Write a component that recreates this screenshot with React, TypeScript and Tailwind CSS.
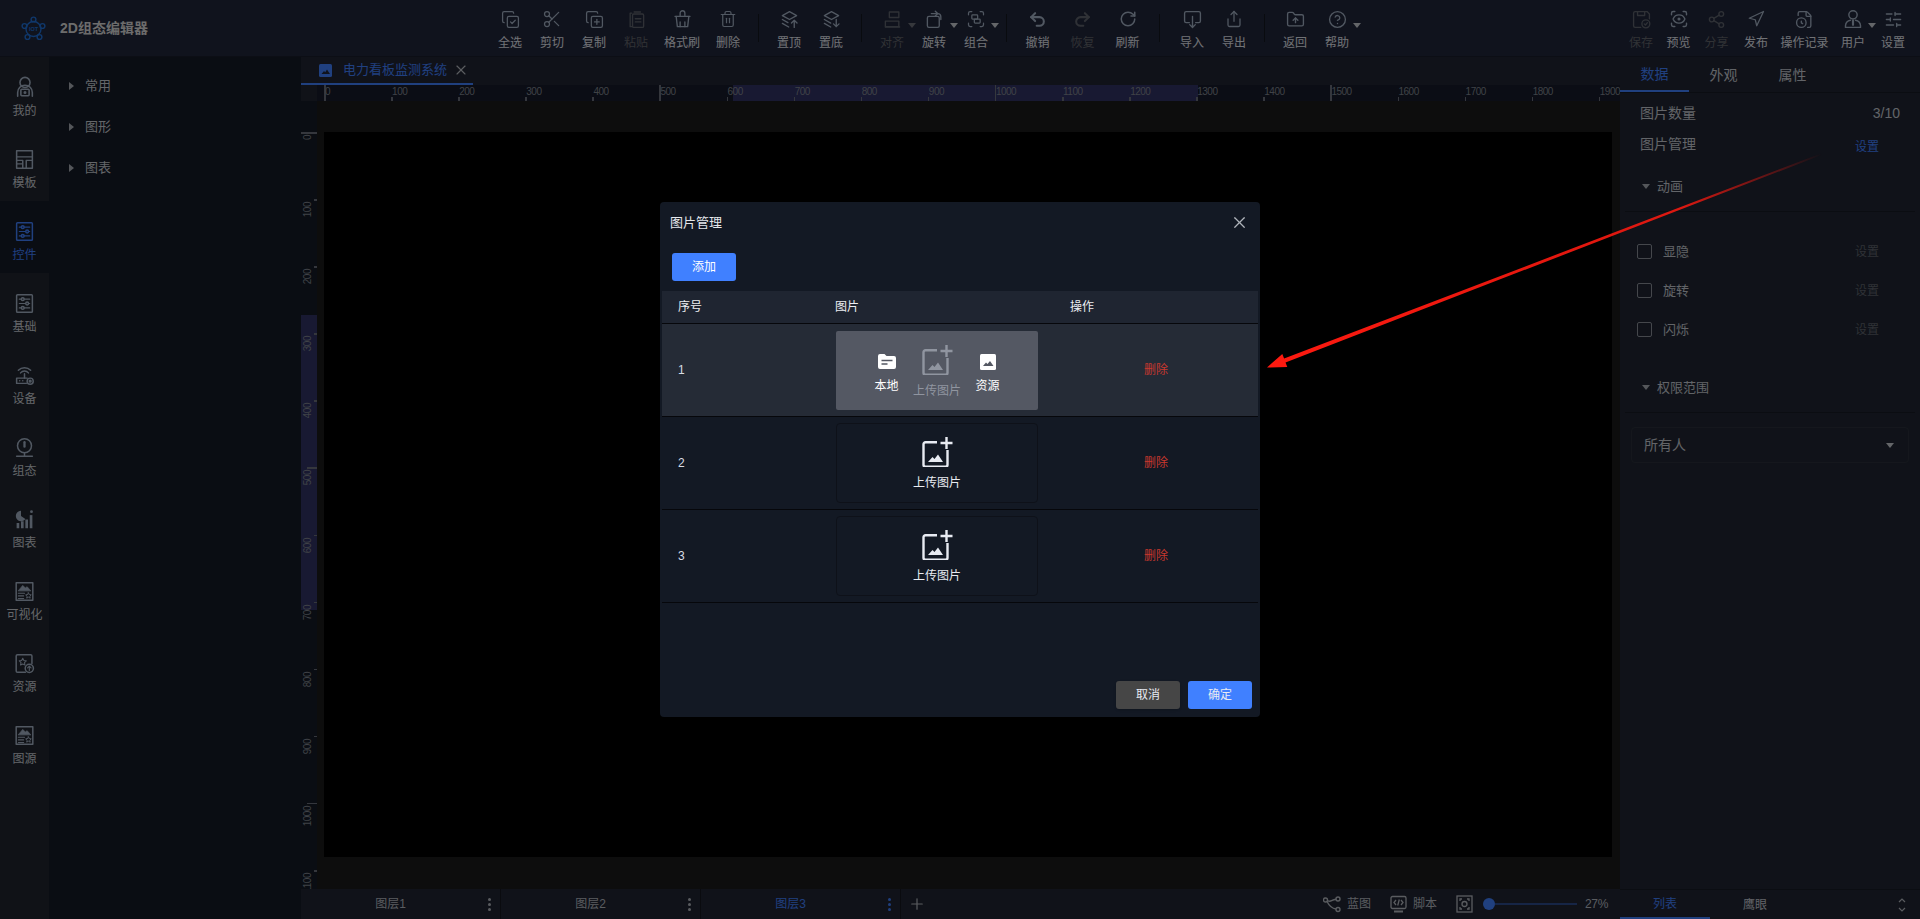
import React from 'react';
import {
  CircleHelp,
  CopyCheck,
  CopyPlus,
  FileClock,
  FolderUp,
  Group,
  Navigation,
  Plus,
  Redo2,
  RotateCw,
  ScanEye,
  Scissors,
  Share,
  Share2,
  SlidersHorizontal,
  Trash2,
  Undo2,
  X,
} from 'lucide-react';

// ---- small drawings the icon package has no match for ----
function Svg({ size = 19, children, className = '' }: { size?: number; children: React.ReactNode; className?: string }) {
  return (
    <svg width={size} height={size} viewBox="0 0 24 24" fill="none" stroke="currentColor" strokeWidth={1.7} strokeLinecap="round" strokeLinejoin="round" className={className}>
      {children}
    </svg>
  );
}

const PasteIcon = () => (
  <Svg>
    <path d="M6 4H4v17h2" />
    <rect x="7" y="5" width="14" height="17" rx="1.5" />
    <path d="M9 2.5h8M10.5 11h7M10.5 15h7" />
  </Svg>
);
const BrushIcon = () => (
  <Svg>
    <path d="M9 7V4a3 3 0 0 1 6 0v3" />
    <path d="M2.5 8h19" />
    <path d="M4 8l1.5 13h13L20 8" />
    <path d="M9 21v-6M15 21v-6" />
  </Svg>
);
const LayerTopIcon = () => (
  <Svg>
    <path d="M12 2l9 5-9 5-9-5z" />
    <path d="M3 12l7 4M3 17l8 4.5" />
    <path d="M18 22v-9M14.5 16.5L18 13l3.5 3.5" />
  </Svg>
);
const LayerBottomIcon = () => (
  <Svg>
    <path d="M12 2l9 5-9 5-9-5z" />
    <path d="M3 12l8 4.5M3 17l8 4.5" />
    <path d="M18 12v9M14.5 17.5L18 21l3.5-3.5" />
  </Svg>
);
const AlignIcon = () => (
  <Svg>
    <rect x="8" y="2.5" width="12" height="7" />
    <rect x="3" y="14" width="17" height="7" />
    <path d="M3 21.5h18" />
  </Svg>
);
const RotateIcon = () => (
  <Svg>
    <rect x="3" y="8" width="15" height="14" rx="2" />
    <path d="M8 4.5h8a4 4 0 0 1 4 4V12" />
    <path d="M13 1.5l3 3-3 3" />
  </Svg>
);
const ImportIcon = () => (
  <Svg>
    <path d="M8 16H4a2 2 0 0 1-2-2V4a2 2 0 0 1 2-2h16a2 2 0 0 1 2 2v10a2 2 0 0 1-2 2h-4" />
    <path d="M12 8v14M8.5 18.5L12 22l3.5-3.5" />
  </Svg>
);
const SaveIcon = () => (
  <Svg>
    <path d="M11 22H4a2 2 0 0 1-2-2V4a2 2 0 0 1 2-2h15l3 3v6" />
    <path d="M7 2v5h9V2" />
    <circle cx="17.5" cy="17.5" r="5" />
    <path d="M15.5 17.5l1.5 1.5 2.5-3" />
  </Svg>
);
const UserIcon = () => (
  <Svg size={20}>
    <circle cx="12" cy="7" r="5" />
    <path d="M3 22v-2a7 7 0 0 1 6-6.5M21 22v-2a7 7 0 0 0-6-6.5" />
    <path d="M3 22h18" />
    <path d="M12 14v5" strokeWidth={2.6} />
  </Svg>
);

const BoxSliders = () => (
  <Svg size={21}>
    <rect x="3" y="2" width="18" height="20" rx="1" />
    <path d="M6 7h12M6 12h12M6 17h12" strokeWidth={1.2} />
    <circle cx="10" cy="7" r="1.6" fill="#20263a" />
    <circle cx="15" cy="12" r="1.6" fill="#20263a" />
    <circle cx="10" cy="17" r="1.6" fill="#20263a" />
  </Svg>
);
function GalleryIcon() {
  return (
    <Svg size={21}>
      <rect x="2.5" y="2" width="19" height="20" />
      <path d="M5 11l5-6 3 3 2-1.5 4 4.5z" fill="currentColor" strokeWidth={0.8} />
      <path d="M5 14h7M5 17h6M5 20h6" strokeWidth={1.3} />
      <path d="M16.5 13.5l1 2 2.2.3-1.6 1.6.4 2.2-2-1.1-2 1.1.4-2.2-1.6-1.6 2.2-.3z" strokeWidth={1.1} />
    </Svg>
  );
}
const railIcons: Record<string, React.ReactNode> = {
  我的: (
    <Svg size={22}>
      <circle cx="12" cy="7" r="5.5" />
      <path d="M4 22v-4a8 8 0 0 1 16 0v4" />
      <rect x="7.5" y="14.5" width="9" height="7" rx="1" />
      <circle cx="12" cy="18" r=".8" />
    </Svg>
  ),
  模板: (
    <Svg size={21}>
      <rect x="3" y="2" width="18" height="20" />
      <path d="M3 9h18M3 13h7v9M14 13h7M14 13v9M3 17h7" />
    </Svg>
  ),
  控件: <BoxSliders />,
  基础: <BoxSliders />,
  设备: (
    <Svg size={21}>
      <path d="M7.5 9a6 6 0 0 1 9 0M5 6a10 10 0 0 1 14 0" />
      <path d="M12 10v5" />
      <path d="M14 21H3v-6h12" />
      <circle cx="18.5" cy="18.5" r="3.5" />
      <circle cx="18.5" cy="18.5" r="1" />
      <path d="M6.5 18h.01M10 18h.01" />
    </Svg>
  ),
  组态: (
    <Svg size={21}>
      <circle cx="12" cy="10" r="8" />
      <path d="M12 6v5" strokeWidth={2.6} />
      <path d="M12 18v3M3 22h18" />
    </Svg>
  ),
  图表: (
    <svg width={21} height={21} viewBox="0 0 24 24" fill="currentColor">
      <path d="M8 2a6 6 0 1 0 5 9.5L8 8z" />
      <rect x="3" y="16" width="3" height="6" />
      <rect x="8" y="14" width="3" height="8" />
      <rect x="13" y="12" width="3" height="10" />
      <rect x="18" y="7" width="3" height="15" />
      <circle cx="20" cy="3" r="1.6" />
    </svg>
  ),
  可视化: <GalleryIcon />,
  资源: (
    <Svg size={21}>
      <path d="M13 22H4a1.5 1.5 0 0 1-1.5-1.5v-17A1.5 1.5 0 0 1 4 2h15a1.5 1.5 0 0 1 1.5 1.5V12" />
      <path d="M10 6l1.3 2.6 2.7.4-2 2 .5 2.8-2.5-1.3-2.5 1.3.5-2.8-2-2 2.7-.4z" strokeWidth={1.2} />
      <circle cx="17.5" cy="17.5" r="4.7" />
      <path d="M17.5 20v-5M15.5 17l2-2 2 2" strokeWidth={1.3} />
    </Svg>
  ),
  图源: <GalleryIcon />,
};

// tiny blue logo
const Logo = () => (
  <svg width={25} height={25} viewBox="0 0 25 25" fill="none" stroke="currentColor" strokeWidth={1.4}>
    <circle cx="12.5" cy="3.5" r="2.4" />
    <circle cx="3.5" cy="10" r="2.4" />
    <circle cx="21.5" cy="10" r="2.4" />
    <circle cx="6.5" cy="21" r="2.4" />
    <circle cx="18.5" cy="21" r="2.4" />
    <circle cx="12.5" cy="13" r="7.5" />
    <text x="12.5" y="15" textAnchor="middle" fontSize="5.5" fontWeight="700" fill="currentColor" stroke="none">IOT</text>
  </svg>
);

function Caret({ className = '' }: { className?: string }) {
  return <span className={`inline-block w-0 h-0 border-x-[4px] border-t-[5px] border-x-transparent border-t-current ${className}`} />;
}

function ToolItem({
  label,
  className = 'w-[42px]',
  disabled,
  caret,
  children,
}: {
  label: string;
  className?: string;
  disabled?: boolean;
  caret?: boolean;
  children: React.ReactNode;
}) {
  return (
    <div className={`flex flex-col items-center pt-[10px] shrink-0 ${className}`}>
      <div className={`relative h-[18px] flex items-center justify-center ${disabled ? 'text-[#5e636c]' : 'text-[#a3b1c4]'}`}>
        {children}
        {caret && <Caret className={`absolute left-[25px] top-[13px] ${disabled ? 'text-[#6d7078]' : 'text-[#c8ccd2]'}`} />}
      </div>
      <div className={`mt-[7px] text-xs leading-4 whitespace-nowrap ${disabled ? 'text-[#62656b]' : 'text-[#e0e5ec]'}`}>{label}</div>
    </div>
  );
}

const Divider = ({ className = 'mx-[9px]' }: { className?: string }) => (
  <div className={`w-px h-[28px] mt-[14px] bg-[#13161f] shrink-0 ${className}`} />
);

function Header() {
  return (
    <header className="h-[57px] shrink-0 flex bg-[#20263a] border-b border-[#181c2a]">
      <div className="w-[489px] shrink-0 flex items-center pl-[21px]">
        <span className="text-[#1f6fd6]"><Logo /></span>
        <span className="ml-[14px] text-sm font-bold text-[#d8d8d8]">2D组态编辑器</span>
      </div>
      <ToolItem label="全选"><CopyCheck size={19} strokeWidth={1.6} /></ToolItem>
      <ToolItem label="剪切"><Scissors size={20} strokeWidth={1.5} /></ToolItem>
      <ToolItem label="复制"><CopyPlus size={19} strokeWidth={1.6} /></ToolItem>
      <ToolItem label="粘贴" disabled><PasteIcon /></ToolItem>
      <ToolItem label="格式刷" className="w-[50px]"><BrushIcon /></ToolItem>
      <ToolItem label="删除"><Trash2 size={18} strokeWidth={1.6} /></ToolItem>
      <Divider />
      <ToolItem label="置顶"><LayerTopIcon /></ToolItem>
      <ToolItem label="置底"><LayerBottomIcon /></ToolItem>
      <Divider />
      <ToolItem label="对齐" disabled caret><AlignIcon /></ToolItem>
      <ToolItem label="旋转" caret><RotateIcon /></ToolItem>
      <ToolItem label="组合" caret><Group size={20} strokeWidth={1.5} /></ToolItem>
      <Divider />
      <ToolItem label="撤销" className="w-[45px] ml-[-1px]"><Undo2 size={19} strokeWidth={2.6} /></ToolItem>
      <ToolItem label="恢复" className="w-[45px]" disabled><Redo2 size={19} strokeWidth={2.6} /></ToolItem>
      <ToolItem label="刷新" className="w-[45px]"><RotateCw size={18} strokeWidth={2} /></ToolItem>
      <Divider className="ml-[9px] mr-[11px]" />
      <ToolItem label="导入"><ImportIcon /></ToolItem>
      <ToolItem label="导出"><Share size={18} strokeWidth={1.7} /></ToolItem>
      <Divider />
      <ToolItem label="返回"><FolderUp size={19} strokeWidth={1.7} /></ToolItem>
      <ToolItem label="帮助" caret><CircleHelp size={19} strokeWidth={1.7} /></ToolItem>

      <div className="ml-auto flex pr-[7px]">
        <ToolItem label="保存" className="w-[38px]" disabled><SaveIcon /></ToolItem>
        <ToolItem label="预览" className="w-[37px]"><ScanEye size={20} strokeWidth={1.7} /></ToolItem>
        <ToolItem label="分享" className="w-[39px]" disabled><Share2 size={19} strokeWidth={1.7} /></ToolItem>
        <ToolItem label="发布" className="w-[40px]"><Navigation size={18} strokeWidth={1.7} /></ToolItem>
        <ToolItem label="操作记录" className="w-[57px]"><FileClock size={19} strokeWidth={1.7} /></ToolItem>
        <ToolItem label="用户" className="w-[40px]" caret><UserIcon /></ToolItem>
        <ToolItem label="设置" className="w-[40px]"><SlidersHorizontal size={19} strokeWidth={1.7} /></ToolItem>
      </div>
    </header>
  );
}

const RAIL = ['我的', '模板', '控件', '基础', '设备', '组态', '图表', '可视化', '资源', '图源'];

function Rail() {
  return (
    <nav className="w-[49px] shrink-0 bg-[#20252f]">
      {RAIL.map((name) => {
        const active = name === '控件';
        return (
          <div key={name} className={`h-[72px] flex flex-col items-center pt-[20px] ${active ? 'bg-[#141a26]' : ''}`}>
            <div className={`h-5 flex items-center justify-center ${active ? 'text-[#4080ff]' : 'text-[#a3b1c4]'}`}>{railIcons[name]}</div>
            <div className={`mt-[6px] h-4 text-xs leading-4 whitespace-nowrap ${active ? 'text-[#4080ff]' : 'text-[#c8ccd2]'}`}>{name}</div>
          </div>
        );
      })}
    </nav>
  );
}

function Library() {
  return (
    <aside className="w-[252px] shrink-0 bg-[#141a26] pt-[8px]">
      {['常用', '图形', '图表'].map((name) => (
        <div key={name} className="h-[41px] flex items-center pl-[20px] text-[13px] text-[#c8ccd2]">
          <span className="w-0 h-0 border-y-[4px] border-l-[5px] border-y-transparent border-l-[#a8adb5] mr-[11px]" />
          {name}
        </div>
      ))}
    </aside>
  );
}

const TICKS_X = Array.from({ length: 20 }, (_, i) => i * 100);
const TICKS_Y = Array.from({ length: 12 }, (_, i) => i * 100);

function TopRuler() {
  return (
    <div className="h-4 shrink-0 flex bg-[#161b2a] text-[10px] leading-[14px] tracking-[-0.5px] text-[#7f848e]">
      <div className="w-4 shrink-0 bg-[#212530]" />
      <div className="relative flex-1 flex pl-[7px] overflow-hidden">
        <div className="absolute left-[416px] top-0 w-[465px] h-full bg-[#313264]" />
        {TICKS_X.map((t) => (
          <div key={t} className="relative w-[67.1px] shrink-0 pl-[1px]">
            <span className={`absolute left-0 bottom-0 w-[1.5px] bg-[#6a6f7a] ${t % 500 === 0 ? 'h-4' : 'h-[4px]'}`} />
            <span className="relative">{t}</span>
          </div>
        ))}
      </div>
    </div>
  );
}

function LeftRuler() {
  return (
    <div className="relative w-4 shrink-0 bg-[#151b27] pt-[31px] overflow-hidden text-[10px] leading-[14px] tracking-[-0.5px] text-[#7f848e]">
      <div className="absolute left-0 top-[214px] w-full h-[295px] bg-[#313264]" />
      {TICKS_Y.map((t) => (
        <div key={t} className="relative h-[67.1px]">
          <span className={`absolute right-0 top-0 h-[1.5px] bg-[#6a6f7a] ${t === 0 ? 'w-4' : t % 500 === 0 ? 'w-[10px]' : 'w-[3px]'}`} />
          <span className="absolute left-0 top-[3px] [writing-mode:vertical-rl] rotate-180">{t}</span>
        </div>
      ))}
    </div>
  );
}

function LayerTab({ name, active }: { name: string; active?: boolean }) {
  return (
    <div className={`relative w-[200px] shrink-0 flex items-center justify-center pr-[20px] border-r border-[#14171f] text-xs ${active ? 'text-[#4080ff]' : 'text-[#b4b8c0]'}`}>
      {name}
      <span className="absolute right-[9px] top-[9px] flex flex-col gap-[2px]">
        <i className="w-[3px] h-[3px] rounded-full bg-current" />
        <i className="w-[3px] h-[3px] rounded-full bg-current" />
        <i className="w-[3px] h-[3px] rounded-full bg-current" />
      </span>
    </div>
  );
}

function MountainBox({ className }: { className: string }) {
  return (
    <svg viewBox="0 0 13 13" className={`shrink-0 ${className}`}>
      <rect width="13" height="13" rx="1.5" fill="#4080ff" />
      <path d="M2.5 10l2.5-3 1.2 1.2L8 5.5 11 10z" fill="#20263a" />
    </svg>
  );
}

function Stage() {
  return (
    <main className="flex-1 min-w-0 flex flex-col">
      <div className="h-[28px] shrink-0 flex bg-[#202532]">
        <div className="w-[172px] flex items-center pl-[18px] border-b-2 border-[#4080ff] text-[13px] text-[#4080ff]">
          <MountainBox className="w-[13px] h-[13px] mr-[11px]" />
          <span className="whitespace-nowrap">电力看板监测系统</span>
          <X size={16} strokeWidth={1.7} className="ml-[6px] shrink-0 text-[#b8bcc4]" />
        </div>
      </div>
      <TopRuler />
      <div className="flex-1 min-h-0 flex">
        <LeftRuler />
        <div className="flex-1 pl-[7px] pr-[8px] pt-[31px] pb-[32px] bg-[#1b1b1b]">
          <div className="w-full h-full bg-black" />
        </div>
      </div>
      <div className="h-[30px] shrink-0 flex bg-[#202532]">
        <LayerTab name="图层1" />
        <LayerTab name="图层2" />
        <LayerTab name="图层3" active />
        <div className="w-[32px] flex items-center justify-center text-[#b4b8c0]"><Plus size={18} strokeWidth={1.6} /></div>
        <div className="ml-auto flex items-center pr-[11px] text-xs text-[#b4b8c0]">
          <svg width={18} height={18} viewBox="0 0 18 18" fill="none" stroke="currentColor" strokeWidth={1.4}>
            <circle cx="2.5" cy="5" r="2" />
            <circle cx="15" cy="4" r="2" />
            <circle cx="15" cy="14.5" r="2" />
            <path d="M4.5 5.5C8 8 8 4.5 13 4.2M4 6.500c2 4 5 7 9 7.500" />
          </svg>
          <span className="ml-[6px]">蓝图</span>
          <svg className="ml-[19px]" width={17} height={18} viewBox="0 0 17 18" fill="none" stroke="currentColor" strokeWidth={1.3}>
            <rect x="1" y="1.5" width="15" height="12" rx="1.5" />
            <path d="M4 16.5h9" strokeWidth={2} />
            <path d="M6 5l-2 2.5L6 10M11 5l2 2.5L11 10M9.3 4.5l-1.6 6" />
          </svg>
          <span className="ml-[6px]">脚本</span>
          <svg className="ml-[19px]" width={17} height={18} viewBox="0 0 17 18" fill="none" stroke="currentColor" strokeWidth={1.3}>
            <rect x="1" y="1" width="15" height="16" />
            <path d="M4 6V4h2M11 4h2v2M13 12v2h-2M6 14H4v-2" />
            <circle cx="8.5" cy="9" r="2.5" />
          </svg>
          <div className="ml-[10px] flex items-center">
            <span className="w-3 h-3 rounded-full bg-[#4080ff]" />
            <span className="w-[82px] h-[2px] bg-[#2c4a8c]" />
          </div>
          <span className="ml-[8px] w-[24px] tracking-[-0.3px] whitespace-nowrap">27%</span>
        </div>
      </div>
    </main>
  );
}

function Inspector() {
  return (
    <aside className="w-[300px] shrink-0 flex flex-col bg-[#202532] text-[#c4c8d0]">
      <div className="h-[36px] shrink-0 flex text-sm border-b border-[#171a24]">
        <div className="w-[69px] h-[35px] flex items-center justify-center border-b-2 border-[#4080ff] text-[#4080ff]">数据</div>
        <div className="w-[69px] flex items-center justify-center">外观</div>
        <div className="w-[69px] flex items-center justify-center">属性</div>
      </div>
      <div className="mt-[5px] h-[30px] flex items-center justify-between pl-[20px] pr-[20px] text-sm">
        <span>图片数量</span>
        <span>3/10</span>
      </div>
      <div className="h-[31px] flex items-center justify-between pl-[20px] pr-[41px] text-sm">
        <span>图片管理</span>
        <span className="text-xs text-[#4080ff] mt-[6px]">设置</span>
      </div>
      <div className="mt-[16px] mx-[5px] h-[37px] flex items-start pl-[17px] pt-[2px] text-[13px] border-b border-[#171a24]">
        <Caret className="mt-[7px] mr-[7px] text-[#a8adb5]" />
        动画
      </div>
      <div className="mt-[20px]">
        {['显隐', '旋转', '闪烁'].map((name) => (
          <div key={name} className="h-[39px] flex items-center pl-[17px] pr-[41px] text-[13px]">
            <span className="w-[15px] h-[15px] rounded-[2px] border border-[#8a8f99] mr-[11px]" />
            {name}
            <span className="ml-auto text-xs text-[#5f636c]">设置</span>
          </div>
        ))}
      </div>
      <div className="mt-[27px] mx-[5px] h-[37px] flex items-start pl-[17px] pt-[2px] text-[13px] border-b border-[#171a24]">
        <Caret className="mt-[7px] mr-[7px] text-[#a8adb5]" />
        权限范围
      </div>
      <div className="mt-[14px] mx-[11px] h-[36px] flex items-center justify-between pl-[12px] pr-[14px] text-sm rounded-[4px] border border-[#2b2f3a]">
        所有人
        <Caret className="text-[#c8ccd2]" />
      </div>
      <div className="mt-auto h-[30px] flex text-xs border-t border-[#171a24]">
        <div className="w-[90px] flex items-center justify-center border-b-2 border-[#4080ff] text-[#4080ff]">列表</div>
        <div className="w-[90px] flex items-center justify-center">鹰眼</div>
        <div className="ml-auto pr-[12px] flex flex-col justify-center text-[#b4b8c0]">
          <svg width={12} height={18} viewBox="0 0 12 18" fill="none" stroke="currentColor" strokeWidth={1.2}>
            <path d="M3 6l3-3 3 3M3 12l3 3 3-3" />
          </svg>
        </div>
      </div>
    </aside>
  );
}

// ---- modal ----
function UploadGlyph() {
  return (
    <svg width={31} height={30} viewBox="0 0 31 30" fill="none" stroke="currentColor" strokeWidth={2.4}>
      <path d="M15 5.2H3.5a2 2 0 0 0-2 2v20.600a2 2 0 0 0 2 2h20a2 2 0 0 0 2-2V13" />
      <path d="M18.5 6h12M24.5 0v12" strokeWidth={2.4} />
      <path d="M6 25l4.5-5 2 2 3.5-4.5L21 25z" fill="currentColor" stroke="none" />
    </svg>
  );
}

function UploadBox({ hover }: { hover?: boolean }) {
  if (hover) {
    return (
      <div className="relative w-[202px] h-[79px] ml-[1px] rounded-[2px] bg-[#545863] flex justify-center text-white text-xs">
        <div className="w-[51px] flex flex-col items-center pt-[23px]">
          <svg width={18} height={15} viewBox="0 0 18 15">
            <path d="M2 0h4.5L8.500 2H16a2 2 0 0 1 2 2v9a2 2 0 0 1-2 2H2a2 2 0 0 1-2-2V2a2 2 0 0 1 2-2z" fill="#fff" />
            <path d="M3.5 6.5h11M3.5 10h6" stroke="#545863" strokeWidth={1.5} />
          </svg>
          <span className="mt-[9px] leading-4">本地</span>
        </div>
        <div className="w-[50px] flex flex-col items-center pt-[14px] text-[#9095a0]">
          <UploadGlyph />
          <span className="mt-[8px] leading-4 whitespace-nowrap">上传图片</span>
        </div>
        <div className="w-[51px] flex flex-col items-center pt-[23px]">
          <svg width={16} height={16} viewBox="0 0 16 16">
            <rect width="16" height="16" rx="1.5" fill="#fff" />
            <path d="M3 12l3-3.5 1.5 1.5L10 7l3.5 5z" fill="#545863" />
          </svg>
          <span className="mt-[8px] leading-4">资源</span>
        </div>
      </div>
    );
  }
  return (
    <div className="w-[202px] h-[80px] ml-[1px] rounded-[4px] border border-[#0e1119] flex flex-col items-center pt-[13px] text-[#e8ebf2] text-xs">
      <UploadGlyph />
      <span className="mt-[8px] leading-4 whitespace-nowrap">上传图片</span>
    </div>
  );
}

function ImageRow({ index, hover }: { index: number; hover?: boolean }) {
  return (
    <div className={`h-[93px] flex items-center border-b border-[#06070b] text-xs text-[#d8dce4] ${hover ? 'bg-[#252b36]' : ''}`}>
      <div className="w-[173px] pl-[16px]">{index}</div>
      <div className="w-[235px]">
        <UploadBox hover={hover} />
      </div>
      <div className="flex-1 pl-[74px] text-[#c9382e]">删除</div>
    </div>
  );
}

function ImageModal() {
  return (
    <div className="fixed inset-0 z-10 flex items-center justify-center bg-black/50">
      <div className="w-[600px] h-[515px] rounded-[4px] bg-[#131924] flex flex-col px-[2px] text-white">
        <div className="h-[41px] shrink-0 flex items-center justify-between pl-[8px] pr-[9px] text-[13px] text-[#e4e7ec]">
          图片管理
          <X size={19} strokeWidth={1.5} className="text-[#b0b4bb]" />
        </div>
        <div className="mt-[10px] ml-[10px] w-16 h-7 shrink-0 rounded-[3px] bg-[#4080ff] flex items-center justify-center text-xs">添加</div>
        <div className="mt-[10px] h-[33px] shrink-0 flex items-center bg-[#1f2531] border-b border-[#06070b] text-xs text-[#eceef2]">
          <div className="w-[173px] pl-[16px]">序号</div>
          <div className="w-[235px]">图片</div>
          <div>操作</div>
        </div>
        <ImageRow index={1} hover />
        <ImageRow index={2} />
        <ImageRow index={3} />
        <div className="mt-auto mb-[8px] flex justify-end gap-2 pr-[6px] text-xs text-[#e8ebf2]">
          <div className="w-16 h-7 rounded-[3px] bg-[#464646] flex items-center justify-center shadow-sm">取消</div>
          <div className="w-16 h-7 rounded-[3px] bg-[#4080ff] flex items-center justify-center">确定</div>
        </div>
      </div>
    </div>
  );
}

// annotation someone drew on top of the screenshot
function RedArrow() {
  return (
    <svg className="absolute inset-0 z-20 pointer-events-none" width={1920} height={919} viewBox="0 0 1920 919" fill="none">
      <defs>
        <linearGradient id="arrowFade" gradientUnits="userSpaceOnUse" x1="1822" y1="154" x2="1268" y2="367">
          <stop offset="0" stopColor="#ff1a10" stopOpacity="0" />
          <stop offset="0.25" stopColor="#ff1a10" stopOpacity="0.85" />
          <stop offset="1" stopColor="#ff1a10" />
        </linearGradient>
      </defs>
      <path d="M1821.5 153.2 L1822.2 154.8 L1285.5 362.4 L1287.3 367 L1267 367.5 L1282.3 354 L1284.1 358.6 Z" fill="url(#arrowFade)" />
    </svg>
  );
}

export default function App() {
  return (
    <div className="relative w-[1920px] h-[919px] overflow-hidden flex flex-col bg-[#141a26] font-['Liberation_Sans','Noto_Sans_CJK_SC',sans-serif]">
      <Header />
      <div className="flex-1 min-h-0 flex">
        <Rail />
        <Library />
        <Stage />
        <Inspector />
      </div>
      <ImageModal />
      <RedArrow />
    </div>
  );
}
